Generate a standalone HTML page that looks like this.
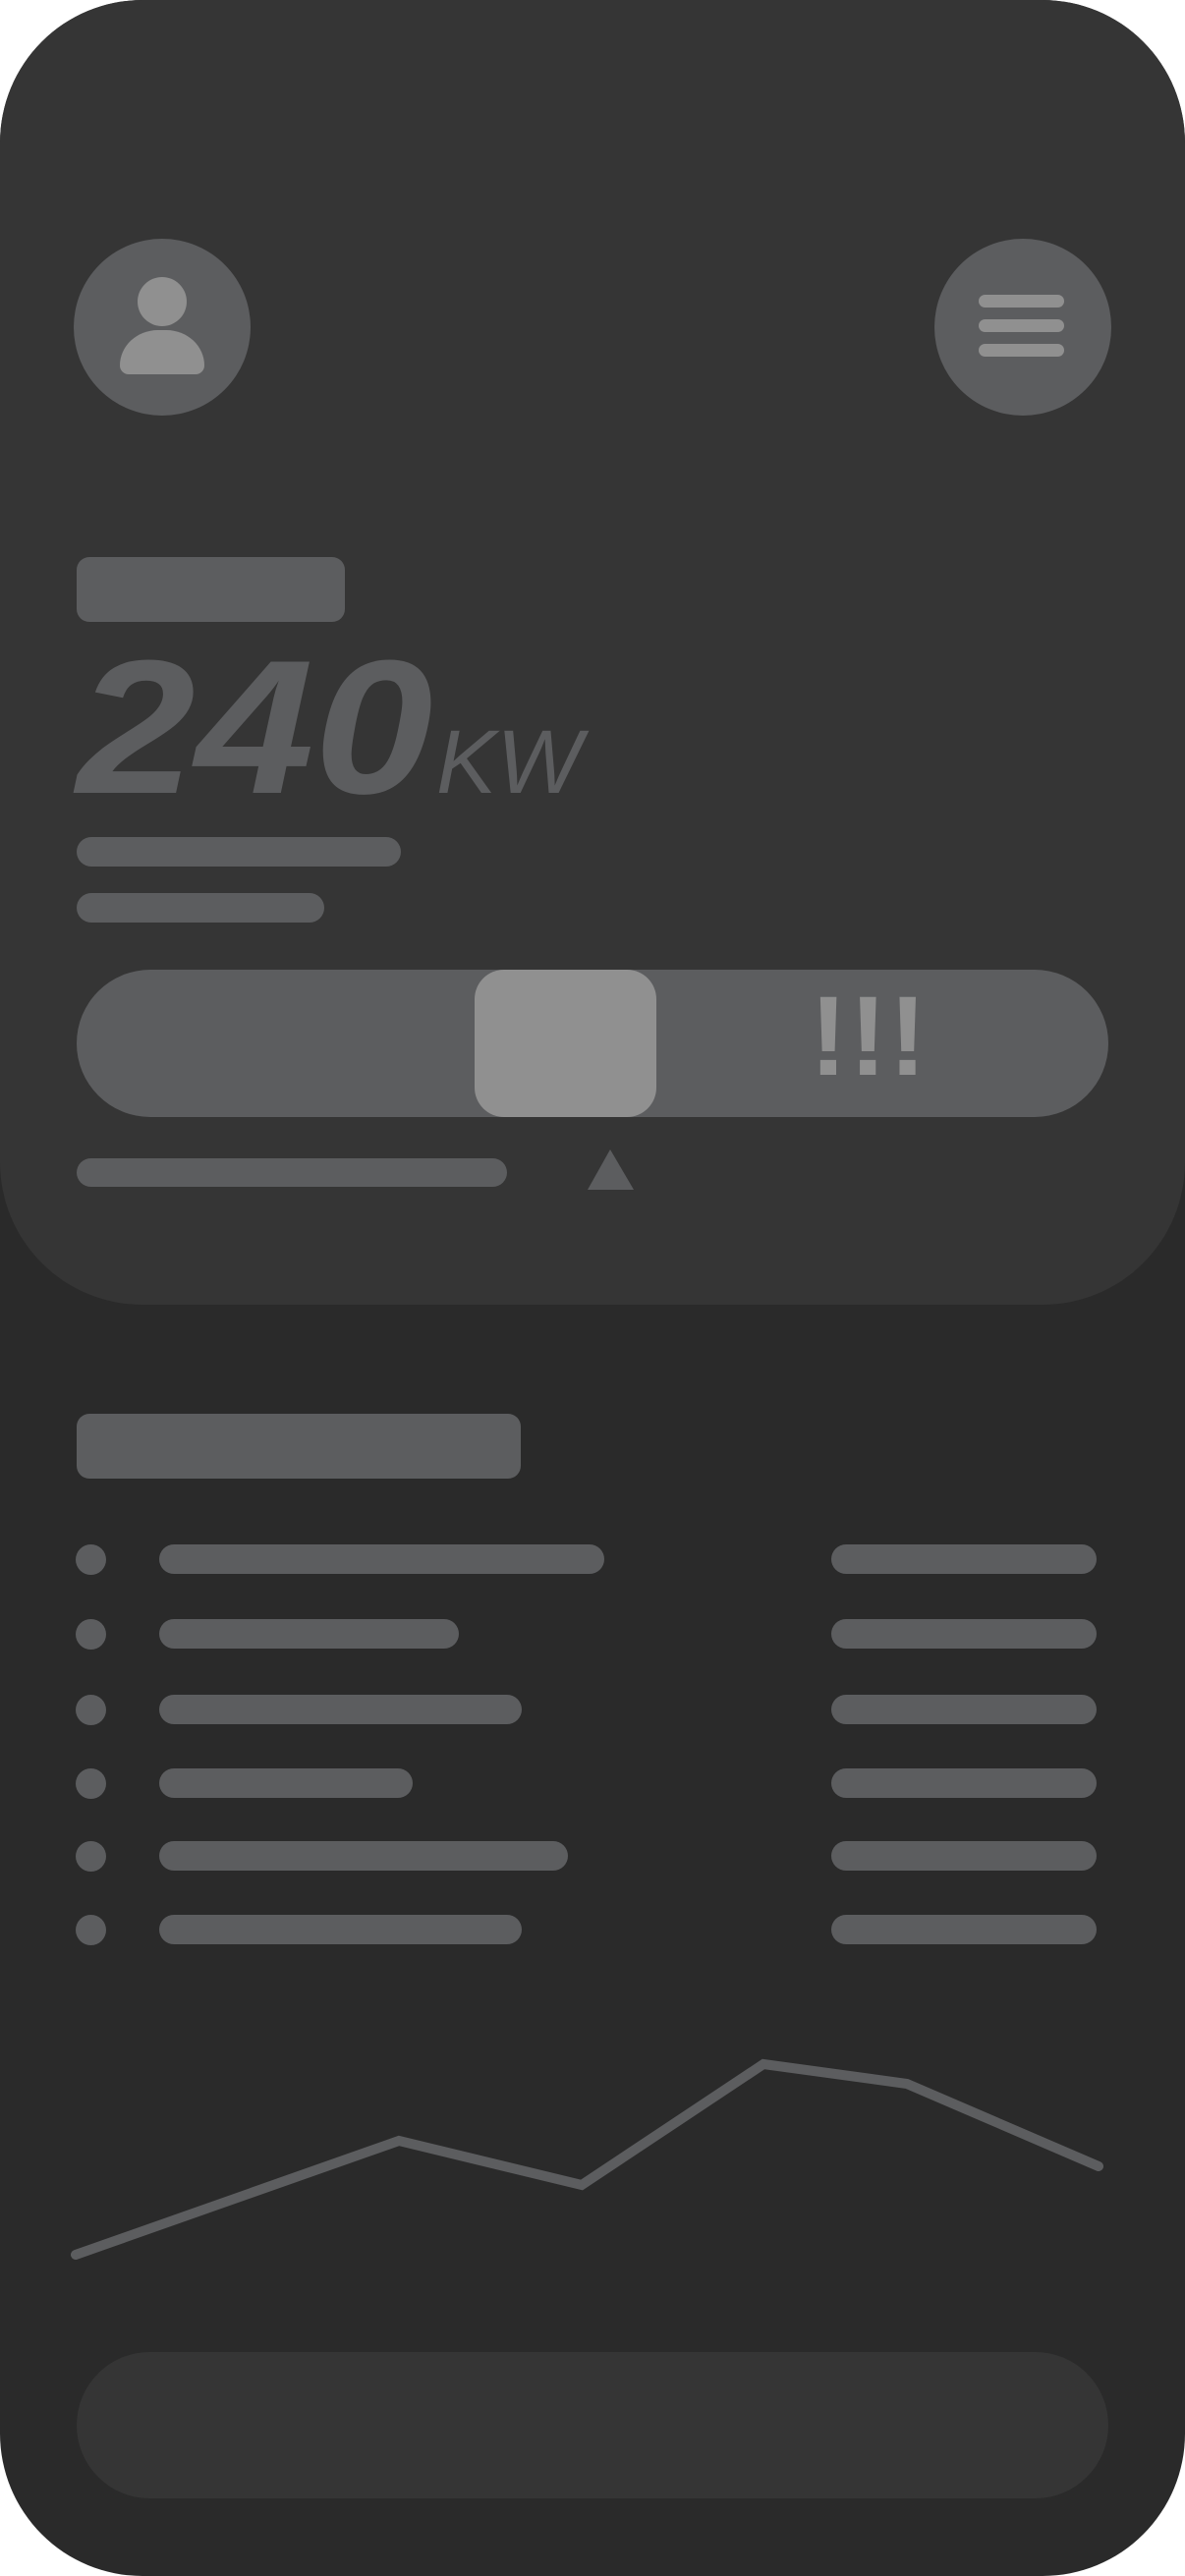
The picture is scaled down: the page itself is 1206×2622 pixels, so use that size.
<!DOCTYPE html>
<html><head><meta charset="utf-8"><style>
html,body{margin:0;padding:0;background:#fff;}
.page{position:relative;width:1206px;height:2622px;background:#2a2a2a;border-radius:145px;overflow:hidden;font-family:"Liberation Sans",sans-serif;}
.card{position:absolute;left:0;top:0;width:1206px;height:1328px;background:#353535;border-radius:145px;}
.a{position:absolute;background:#5c5d5f;}
.l{position:absolute;background:#909090;}
</style></head><body><div class="page">
<div class="card"></div>
<div class="a" style="left:75px;top:243px;width:180px;height:180px;border-radius:50%"></div>
<div class="l" style="left:140px;top:282px;width:50px;height:50px;border-radius:50%"></div>
<div class="l" style="left:122px;top:336px;width:86px;height:45px;border-radius:43px 43px 10px 10px / 40px 40px 10px 10px"></div>
<div class="a" style="left:951px;top:243px;width:180px;height:180px;border-radius:50%"></div>
<div class="l" style="left:996px;top:300px;width:87px;height:13px;border-radius:7px"></div>
<div class="l" style="left:996px;top:325px;width:87px;height:13px;border-radius:7px"></div>
<div class="l" style="left:996px;top:350px;width:87px;height:13px;border-radius:7px"></div>
<div class="a" style="left:78px;top:567px;width:273px;height:66px;border-radius:13px"></div>
<div style="position:absolute;left:78px;top:641px;font-size:194px;font-weight:bold;font-style:italic;color:#5c5d5f;line-height:200px;transform:scaleX(1.12);transform-origin:left top;">240</div>
<div style="position:absolute;left:444px;top:726px;font-size:92px;font-style:italic;color:#5c5d5f;line-height:100px;">KW</div>
<div class="a" style="left:78px;top:852px;width:330px;height:30px;border-radius:15px"></div>
<div class="a" style="left:78px;top:909px;width:252px;height:30px;border-radius:15px"></div>
<div class="a" style="left:78px;top:987px;width:1050px;height:150px;border-radius:75px"></div>
<div class="l" style="left:483px;top:987px;width:185px;height:150px;border-radius:30px"></div>
<div style="position:absolute;left:824px;top:995px;font-size:115px;font-weight:bold;color:#909090;line-height:120px;letter-spacing:2px;">!!!</div>
<div class="a" style="left:78px;top:1179px;width:438px;height:29px;border-radius:15px"></div>
<svg style="position:absolute;left:0;top:0" width="1206" height="2622">
<polygon points="598,1211 645,1211 621,1170" fill="#5c5d5f"/>
<polyline points="77,2295 406,2179 592,2224 777,2101 923,2121 1118,2205" fill="none" stroke="#5c5d5f" stroke-width="10" stroke-linecap="round" stroke-linejoin="miter"/>
</svg>
<div class="a" style="left:78px;top:1439px;width:452px;height:66px;border-radius:13px"></div>
<div class="a" style="left:77px;top:1572px;width:31px;height:31px;border-radius:50%"></div>
<div class="a" style="left:162px;top:1572px;width:453px;height:30px;border-radius:15px"></div>
<div class="a" style="left:846px;top:1572px;width:270px;height:30px;border-radius:15px"></div>
<div class="a" style="left:77px;top:1648px;width:31px;height:31px;border-radius:50%"></div>
<div class="a" style="left:162px;top:1648px;width:305px;height:30px;border-radius:15px"></div>
<div class="a" style="left:846px;top:1648px;width:270px;height:30px;border-radius:15px"></div>
<div class="a" style="left:77px;top:1725px;width:31px;height:31px;border-radius:50%"></div>
<div class="a" style="left:162px;top:1725px;width:369px;height:30px;border-radius:15px"></div>
<div class="a" style="left:846px;top:1725px;width:270px;height:30px;border-radius:15px"></div>
<div class="a" style="left:77px;top:1800px;width:31px;height:31px;border-radius:50%"></div>
<div class="a" style="left:162px;top:1800px;width:258px;height:30px;border-radius:15px"></div>
<div class="a" style="left:846px;top:1800px;width:270px;height:30px;border-radius:15px"></div>
<div class="a" style="left:77px;top:1874px;width:31px;height:31px;border-radius:50%"></div>
<div class="a" style="left:162px;top:1874px;width:416px;height:30px;border-radius:15px"></div>
<div class="a" style="left:846px;top:1874px;width:270px;height:30px;border-radius:15px"></div>
<div class="a" style="left:77px;top:1949px;width:31px;height:31px;border-radius:50%"></div>
<div class="a" style="left:162px;top:1949px;width:369px;height:30px;border-radius:15px"></div>
<div class="a" style="left:846px;top:1949px;width:270px;height:30px;border-radius:15px"></div>
<div style="position:absolute;left:78px;top:2394px;width:1050px;height:149px;border-radius:75px;background:#353535"></div>
</div></body></html>
